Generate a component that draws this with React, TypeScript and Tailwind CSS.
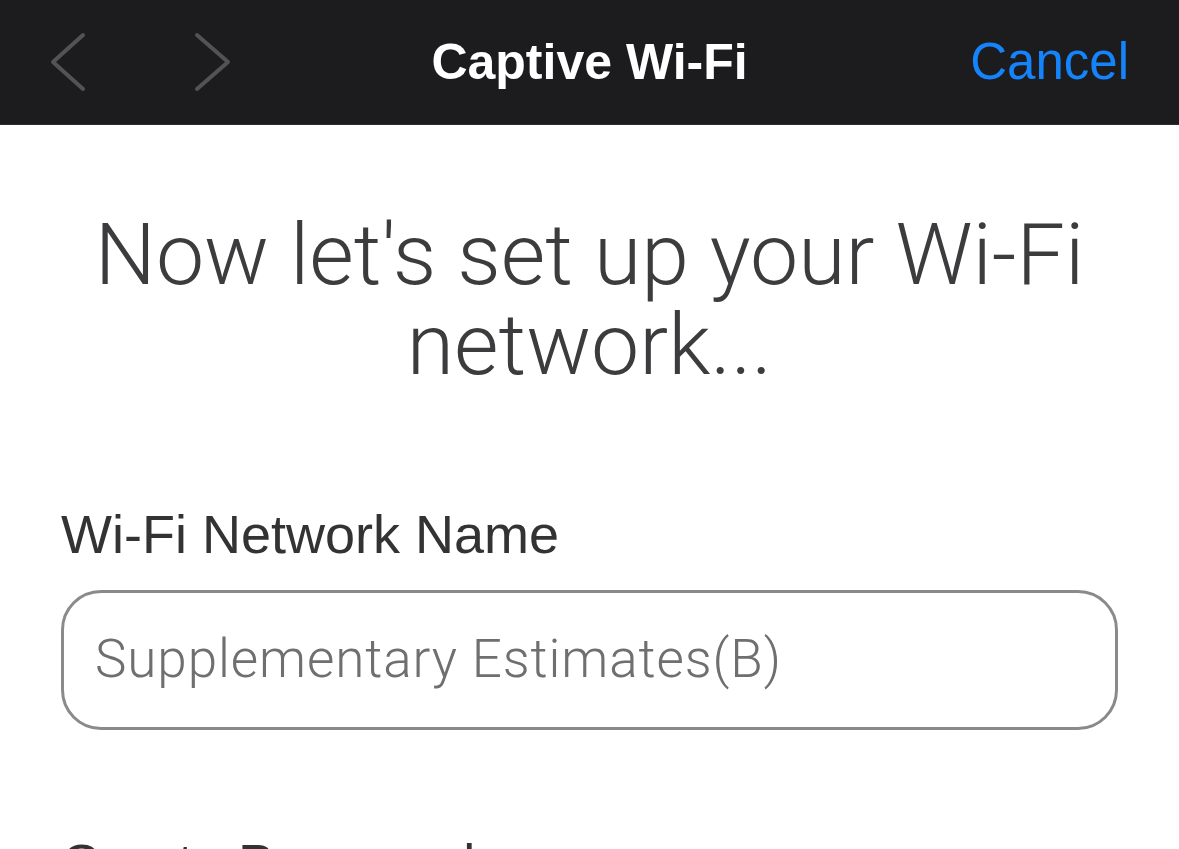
const Chevron = ({ dir }: { dir: 'left' | 'right' }) => (
  <svg width="40" height="60" viewBox="0 0 40 60" fill="none" stroke="#535356" strokeWidth="4" strokeLinecap="round" strokeLinejoin="round">
    {dir === 'left' ? <path d="M33 3 L3 30 L33 57" /> : <path d="M6 3 L37 30 L6 57" />}
  </svg>
);

const Field = ({ label, placeholder }: { label: string; placeholder: string }) => (
  <div className="flex flex-col">
    <label className="text-[54px] leading-[60px] text-[#333333] font-['Liberation_Sans',sans-serif]">{label}</label>
    <div className="mt-[26px] h-[140px] rounded-[40px] border-[3px] border-[#8a8a8a] flex items-center px-[31px]">
      <span className="text-[53px] tracking-[0.9px] font-light text-[#6f6f6f] font-['Roboto',sans-serif]">{placeholder}</span>
    </div>
  </div>
);

export default function App() {
  return (
    <div className="w-[1179px] h-[849px] overflow-hidden bg-white">
      {/* Nav bar */}
      <header className="h-[125px] bg-[#1c1c1e] border-b border-[#2c2c2e] grid grid-cols-[1fr_auto_1fr] items-center px-[50px]">
        <div className="flex items-center gap-[101px]">
          <Chevron dir="left" />
          <Chevron dir="right" />
        </div>
        <h1 className="text-[50px] font-bold text-white font-['Liberation_Sans',sans-serif]">Captive Wi-Fi</h1>
        <div className="flex justify-end">
          <button className="text-[51px] text-[#1584fb] font-['Liberation_Sans',sans-serif]">Cancel</button>
        </div>
      </header>

      {/* Content */}
      <main className="px-[61px]">
        <h2 className="mt-[85px] text-center text-[86px] leading-[90px] font-light text-[#3c3c3e] font-['Roboto',sans-serif]">
          Now let's set up your Wi-Fi network...
        </h2>

        <div className="mt-[114px] flex flex-col gap-[103px]">
          <Field label="Wi-Fi Network Name" placeholder="Supplementary Estimates(B)" />
          <Field label="Create Password" placeholder="" />
        </div>
      </main>
    </div>
  );
}
